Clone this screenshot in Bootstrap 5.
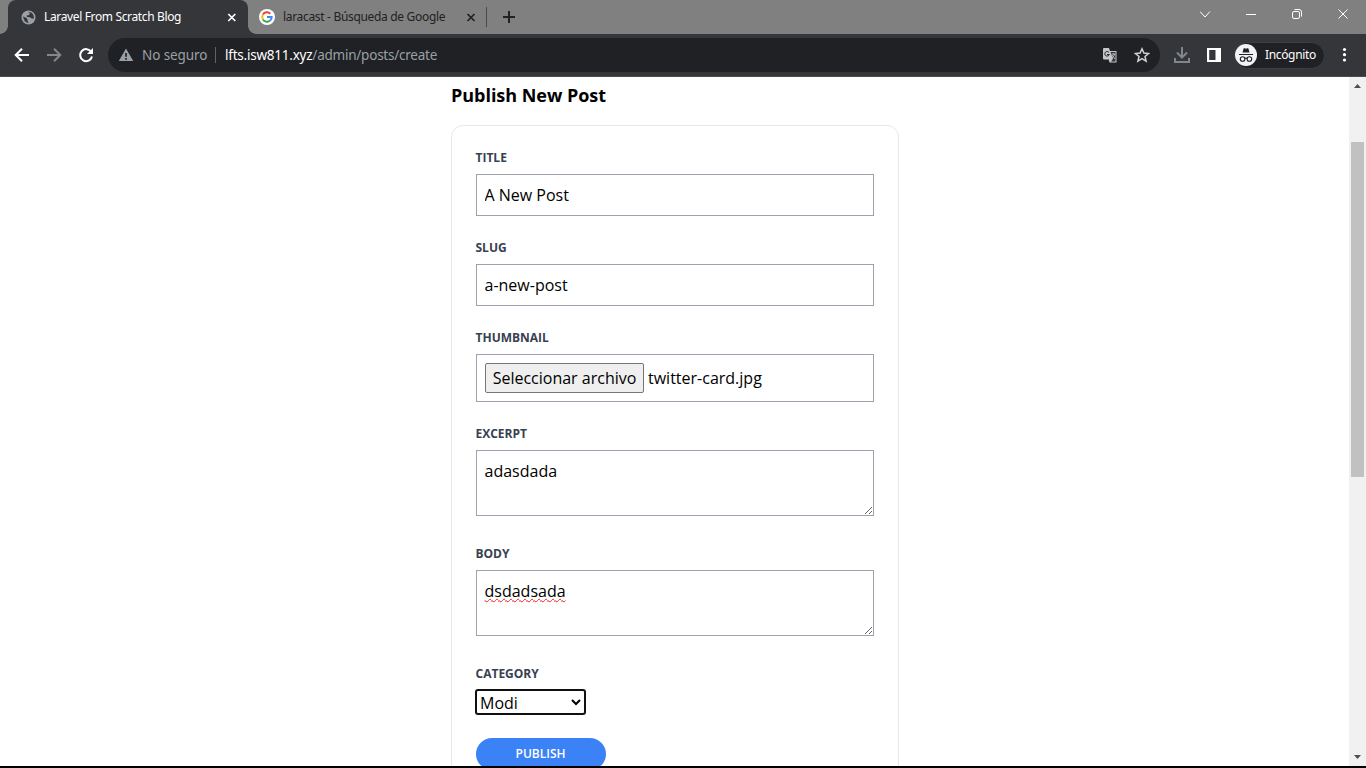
<!DOCTYPE html>
<html lang="es">
<head>
<meta charset="utf-8">
<meta name="viewport" content="width=device-width, initial-scale=1">
<title>Laravel From Scratch Blog</title>
<link href="https://cdn.jsdelivr.net/npm/bootstrap@5.3.0/dist/css/bootstrap.min.css" rel="stylesheet">
<style>
body{height:768px;overflow:hidden;font-family:"Open Sans",sans-serif;color:#000;background:#000}
.window{width:1366px;height:766px}
.chrome-ui{font-family:"Noto Sans","Open Sans",sans-serif;white-space:nowrap}
.tabstrip{height:34px;background:#808080;font-size:12px;line-height:34px}
.tab-on{width:240px;margin-left:8px;height:34px;background:#35363a;color:#fff;border-radius:8px 8px 0 0;padding-left:13px}
.tab-on::before,.tab-on::after{content:"";position:absolute;bottom:0;width:8px;height:8px}
.tab-on::before{left:-8px;background:radial-gradient(circle at 0 0,transparent 7.5px,#35363a 8px)}
.tab-on::after{right:-8px;background:radial-gradient(circle at 100% 0,transparent 7.5px,#35363a 8px)}
.tab-text{letter-spacing:-.36px;width:180px;margin-left:8px}
.tab-off{width:238px;color:#202124;padding-left:11px}
.tab-off .tab-text{letter-spacing:-.32px;width:181px}
.toolbar{height:43px;background:#35363a;border-bottom:1px solid #4d4a4f;font-size:14px}
.omni{height:34px;width:1052px;border-radius:17px;background:#202124;margin-left:13px;color:#9aa0a6}
.warn{margin-left:10px}
.sec{margin-left:8px;width:66px;font-size:13.5px;letter-spacing:-.1px}
.sep{width:1px;height:16px;background:#5f6368;margin:0 9px 0 7px}
.url{font-size:13.5px;letter-spacing:-.23px}
.incog{height:27px;width:91px;border-radius:14px;background:#202124;border:1px solid #3d3e42;color:#fff;font-size:12px;margin-left:11px;margin-right:1px}
.incog-text{margin-left:8px;letter-spacing:-.35px}
.page-view{height:689px;background:#fff}
.form-col{width:448px;margin-left:451px}
.page-title{font-size:18px;line-height:28px;font-weight:700;padding-top:4px;margin-bottom:16px;letter-spacing:-.03px}
.panel{border:1px solid #e5e7eb;border-radius:12px;padding:24px}
.lbl{font-size:12px;line-height:16px;font-weight:700;color:#374151;margin-bottom:8px;text-transform:uppercase;display:block;text-indent:-.5px}
.field{display:block;width:398px;border:1px solid #9ca3af;padding:8px;font-size:16px;line-height:24px;background:#fff;color:#000;border-radius:0;outline:0;text-indent:-.5px}
.field.area{height:66px;resize:both;overflow:auto}
.area-wrap{padding-bottom:6px}
.filebtn{border:1px solid #767676;border-radius:2px;background:#efefef;height:30px;width:159px;line-height:28px;margin-right:4.5px;padding:0}
.misspelt{text-decoration:underline wavy #f02020 1.4px;text-underline-offset:1px;text-decoration-skip-ink:none}
.cat{width:109px;height:24px;border:1px solid #101010;box-shadow:0 0 0 1px #101010;border-radius:2px;background:#fff;color:#000;outline:0;padding:0 0 2px;line-height:20px;display:block;text-indent:-1px}
.pub{width:130px;height:32px;border:0;border-radius:16px;background:#3b82f6;color:#fff;font-size:12px;font-weight:600;line-height:16px;text-indent:-1px}
.vbar{width:17px;background:#f1f1f1}
.vbar .thumb{width:13px;height:335px;background:#c1c1c1;margin-top:48px}
svg{flex:none;display:block}
</style>
</head>
<body>
<div class="window d-flex flex-column overflow-hidden">
<header class="chrome-ui">
<div class="tabstrip d-flex align-items-center">
 <div class="tab-on position-relative d-flex align-items-center">
  <svg width="15" height="15" viewBox="0 0 15 15"><circle cx="7.5" cy="7.5" r="7" fill="#9aa0a6"/><path d="M2 6.5L5.5 8l1 1.5v1.2l1.200 2.300Q3 12.500 2 6.500M7.500 2 9 3.800 7.500 5.200 5.600 5.500 6 7l3 .2 1.700 1.300 2.100.2Q13.300 4 10 2.400Q8.600 1.700 7.500 2" fill="#35363a"/></svg>
  <span class="tab-text">Laravel From Scratch Blog</span>
  <svg width="15" height="15" viewBox="0 0 15 15" stroke="#fff" stroke-width="1.7"><path d="M4.300 4l7 7M11.300 4l-7 7"/></svg>
 </div>
 <div class="tab-off d-flex align-items-center">
  <svg width="16" height="16" viewBox="0 0 16 16"><circle cx="8" cy="8" r="8" fill="#fff"/><g fill="none" stroke-width="2"><path d="M3.900 5.600A4.700 4.700 0 0 1 11.300 4.700" stroke="#ea4335"/><path d="M3.900 10.400A4.700 4.700 0 0 1 3.900 5.600" stroke="#fbbc05"/><path d="M11.200 11.400A4.700 4.700 0 0 1 3.900 10.400" stroke="#34a853"/><path d="M8 8h4.700A4.700 4.700 0 0 1 11.200 11.400" stroke="#4285f4"/></g></svg>
  <span class="tab-text">laracast - Búsqueda de Google</span>
  <svg width="15" height="15" viewBox="0 0 15 15" stroke="#202124" stroke-width="1.700"><path d="M3.500 4l7 7M10.500 4l-7 7"/></svg>
 </div>
 <svg width="40" height="34" viewBox="486 0 40 34" fill="none"><path d="M486.500 7v20" stroke="#4a4a4c"/><path d="M503 17h12M509 11v12" stroke="#202124" stroke-width="2"/></svg>
 <svg class="ms-auto" width="166" height="34" viewBox="1200 0 166 34" fill="none" stroke="#fff"><path d="M1200 11.500l5 5.500 5-5.500M1246 14.500h10M1338.500 9.500l9 9M1347.500 9.500l-9 9"/><rect x="1292.500" y="11.500" width="7" height="7" rx="1.500"/><path d="M1294.500 9.500h4.500q2.500 0 2.500 2.500v4.500"/></svg>
</div>
<div class="toolbar d-flex align-items-center">
 <svg width="95" height="42" viewBox="0 0 95 42" fill="none" stroke-width="2"><path d="M29 21H16M22 14.700L15.700 21l6.300 6.300" stroke="#fff"/><path d="M47 21h13M54 14.700L60.300 21 54 27.300" stroke="#85868a"/><path d="M91.300 18A6 6 0 1 0 92 22.500" stroke="#fff"/><path d="M93 14v6h-6z" fill="#fff"/></svg>
 <div class="omni d-flex align-items-center">
  <svg class="warn" width="16" height="14" viewBox="0 0 16 14"><path d="M8 .5l7.200 12.500H.8z" fill="#9aa0a6"/><path d="M8 5v3.800M8 10v1.700" stroke="#202124" stroke-width="1.700"/></svg>
  <span class="sec">No seguro</span><span class="sep"></span>
  <span class="url"><span class="text-white">lfts.isw811.xyz</span>/admin/posts/create</span>
  <svg class="ms-auto" width="60" height="34" viewBox="1100 0 60 34"><path d="M1104 10h5l1 3h6.500v11.500h-7l-.8-3H1104q-1 0-1-1V11q0-1 1-1" fill="#c4c7ca"/><path d="M1110.500 14h5v9.500h-4.500l2-2.500z" fill="#303134"/><path d="M1109 14.500a2.300 2.300 0 1 0 .3 2h-2.200" stroke="#202124" fill="none"/><path d="M1111.500 16h4M1113.500 15v1M1114.700 16q-.7 3-3 4M1112 17l3 4" stroke="#c4c7ca" fill="none" stroke-width=".9"/><path d="M1142 10.800l1.900 4.300 4.600.4-3.500 3 1.100 4.600-4.100-2.400-4.100 2.400 1.100-4.600-3.500-3 4.600-.4z" fill="none" stroke="#d0d2d5" stroke-width="1.500"/></svg>
 </div>
 <svg width="63" height="42" viewBox="1160 0 63 42" fill="none"><path d="M1182 13v10M1177 18.500l5 5 5-5M1175 24v4h14v-4" stroke="#80868b" stroke-width="2"/><path d="M1207 14h14v14h-14zM1209.200 16v10h6.300V16z" fill="#fff" fill-rule="evenodd"/></svg>
 <div class="incog d-flex align-items-center">
  <svg width="22" height="22" viewBox="0 0 22 22"><circle cx="11" cy="11" r="11" fill="#f1f3f4"/><path d="M7.500 8.500L8.700 4.300h1l1.300.5 1.300-.5h1l1.200 4.200z" fill="#202124"/><g stroke="#202124" fill="none" stroke-width="1.100"><path d="M4 10.500h14M9.800 14.500q1.200-.8 2.400 0"/><circle cx="7.600" cy="15" r="2.300"/><circle cx="14.400" cy="15" r="2.300"/></g></svg>
  <span class="incog-text">Incógnito</span>
 </div>
 <svg width="40" height="42" viewBox="1326 0 40 42" fill="#fff"><circle cx="1344.500" cy="15.500" r="1.600"/><circle cx="1344.500" cy="20.700" r="1.600"/><circle cx="1344.500" cy="26" r="1.600"/></svg>
</div>
</header>
<main class="page-view d-flex">
<div class="flex-grow-1 overflow-hidden">
 <div class="form-col">
  <h1 class="page-title">Publish New Post</h1>
  <form class="panel">
   <div class="mb-4"><label class="lbl" for="title">Title</label><input id="title" class="field" value="A New Post"></div>
   <div class="mb-4"><label class="lbl" for="slug">Slug</label><input id="slug" class="field" value="a-new-post"></div>
   <div class="mb-4"><span class="lbl">Thumbnail</span><div class="field d-flex align-items-center"><button type="button" class="filebtn">Seleccionar archivo</button><span>twitter-card.jpg</span></div></div>
   <div class="mb-4 area-wrap"><label class="lbl" for="excerpt">Excerpt</label><textarea id="excerpt" class="field area">adasdada</textarea></div>
   <div class="mb-4 area-wrap"><span class="lbl">Body</span><div class="field area"><span class="misspelt">dsdadsada</span></div></div>
   <div class="mb-4"><label class="lbl" for="category">Category</label><select id="category" class="cat"><option>Modi</option></select></div>
   <button type="button" class="pub">PUBLISH</button>
  </form>
 </div>
</div>
<div class="vbar d-flex flex-column align-items-center">
 <svg width="17" height="17" viewBox="0 0 17 17" fill="#505050"><path d="M5 11l3.500-4 3.500 4z"/></svg>
 <div class="thumb"></div>
 <svg class="mt-auto" width="17" height="17" viewBox="0 0 17 17" fill="#505050"><path d="M5 6l3.500 4L12 6z"/></svg>
</div>
</main>
</div>
<script src="https://cdn.jsdelivr.net/npm/bootstrap@5.3.0/dist/js/bootstrap.bundle.min.js"></script>
</body>
</html>
